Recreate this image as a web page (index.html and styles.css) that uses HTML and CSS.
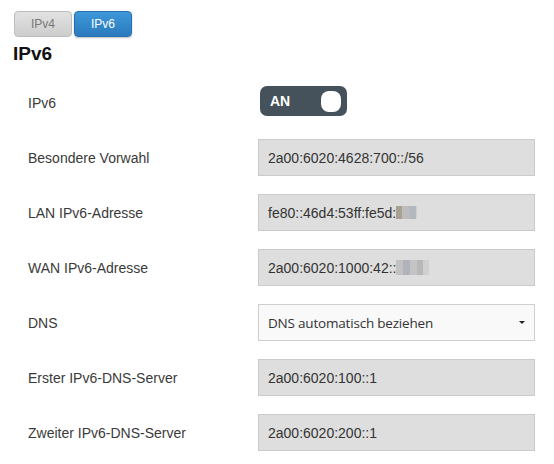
FILE: index.html
```html
<!DOCTYPE html>
<html lang="de">
<head>
    <meta charset="UTF-8" />
    <meta name="viewport" content="width=device-width, initial-scale=1.0" />
    <title>IPv6</title>
    <link rel="stylesheet" href="styles.css">
</head>
<body>

    <div class="tabs">
        <button class="tab">IPv4</button>
        <button class="tab active">IPv6</button>
    </div>

    <h2 class="title">IPv6</h2>

    <form class="settings" autocomplete="off">
        <div class="row">
            <label>IPv6</label>
            <div class="switch">
                <span class="switch-text">AN</span>
                <span class="knob"></span>
            </div>
        </div>

        <div class="row">
            <label>Besondere Vorwahl</label>
            <div class="field">2a00:6020:4628:700::/56</div>
        </div>

        <div class="row">
            <label>LAN IPv6-Adresse</label>
            <div class="field">fe80::46d4:53ff:fe5d:<span class="masked m-short"></span></div>
        </div>

        <div class="row">
            <label>WAN IPv6-Adresse</label>
            <div class="field">2a00:6020:1000:42::<span class="masked m-long"></span></div>
        </div>

        <div class="row">
            <label>DNS</label>
            <div class="select">
                <span>DNS automatisch beziehen</span>
                <span class="caret"></span>
            </div>
        </div>

        <div class="row">
            <label>Erster IPv6-DNS-Server</label>
            <div class="field">2a00:6020:100::1</div>
        </div>

        <div class="row">
            <label>Zweiter IPv6-DNS-Server</label>
            <div class="field">2a00:6020:200::1</div>
        </div>
    </form>

</body>
</html>
```

FILE: styles.css
```css
body {
    font-family: "Liberation Sans", Arial, sans-serif;
    margin: 0;
    background: #fff;
    color: #333;
}

html {
    box-sizing: border-box;
}

*, *:before, *:after {
    box-sizing: inherit;
}

/* tab buttons */
.tabs {
    display: flex;
    gap: 2px;
    padding: 11px 0 0 14px;
}

.tab {
    width: 58px;
    height: 26px;
    font-family: inherit;
    font-size: 12px;
    color: #777;
    background: linear-gradient(#e2e2e2, #cdcdcd);
    border: 1px solid #bdbdbd;
    border-radius: 4px;
    padding: 0;
}

.tab.active {
    color: #fff;
    background: linear-gradient(#3d98d9, #2a7abd);
    border-color: #2870ad;
    box-shadow: 0 1px 2px rgba(0, 0, 0, 0.25);
}

.title {
    font-size: 19px;
    line-height: 24px;
    font-weight: bold;
    color: #111;
    margin: 5px 0 9px 13px;
}

/* form rows */
.settings {
    display: flex;
    flex-direction: column;
}

.row {
    display: grid;
    grid-template-columns: 230px 277px;
    align-items: center;
    height: 55px;
    padding-left: 28px;
}

label {
    font-size: 14px;
    color: #3a3a3a;
}

.field {
    height: 37px;
    display: flex;
    align-items: center;
    padding-left: 9px;
    font-size: 14px;
    color: #333;
    background: #dedede;
    border: 1px solid #cbcbcb;
}

.masked {
    display: inline-block;
    height: 13px;
    background:
        linear-gradient(90deg, #a8a090 0 6px, #bdbdbd 6px 13px, #b3b8c0 13px 20px, #d0d0d0 20px);
}

.m-short {
    width: 21px;
}

.m-long {
    width: 33px;
    height: 15px;
    background:
        linear-gradient(90deg, #c2c2c2 0 7px, #b0b4ba 7px 14px, #c4c4c4 14px 21px, #b8b8b8 21px 27px, #d0d0d0 27px);
}

/* on/off switch */
.switch {
    width: 87px;
    height: 30px;
    margin: 0 0 3px 2px;
    border-radius: 7px;
    background: #45525c;
    display: flex;
    align-items: center;
    justify-content: space-between;
    padding: 0 6px 0 10px;
}

.switch-text {
    font-size: 14px;
    font-weight: bold;
    color: #fff;
}

.knob {
    width: 20px;
    height: 21px;
    border-radius: 8px;
    background: #fff;
}

/* drop-down */
.select {
    height: 37px;
    display: flex;
    align-items: center;
    justify-content: space-between;
    padding: 0 9px 0 9px;
    font-family: "Open Sans", "Noto Sans", sans-serif;
    font-size: 13.5px;
    letter-spacing: -0.2px;
    color: #333;
    background: #f9f9f9;
    border: 1px solid #cfcfcf;
}

.caret {
    width: 0;
    height: 0;
    border-left: 3px solid transparent;
    border-right: 3px solid transparent;
    border-top: 3px solid #222;
}
```
